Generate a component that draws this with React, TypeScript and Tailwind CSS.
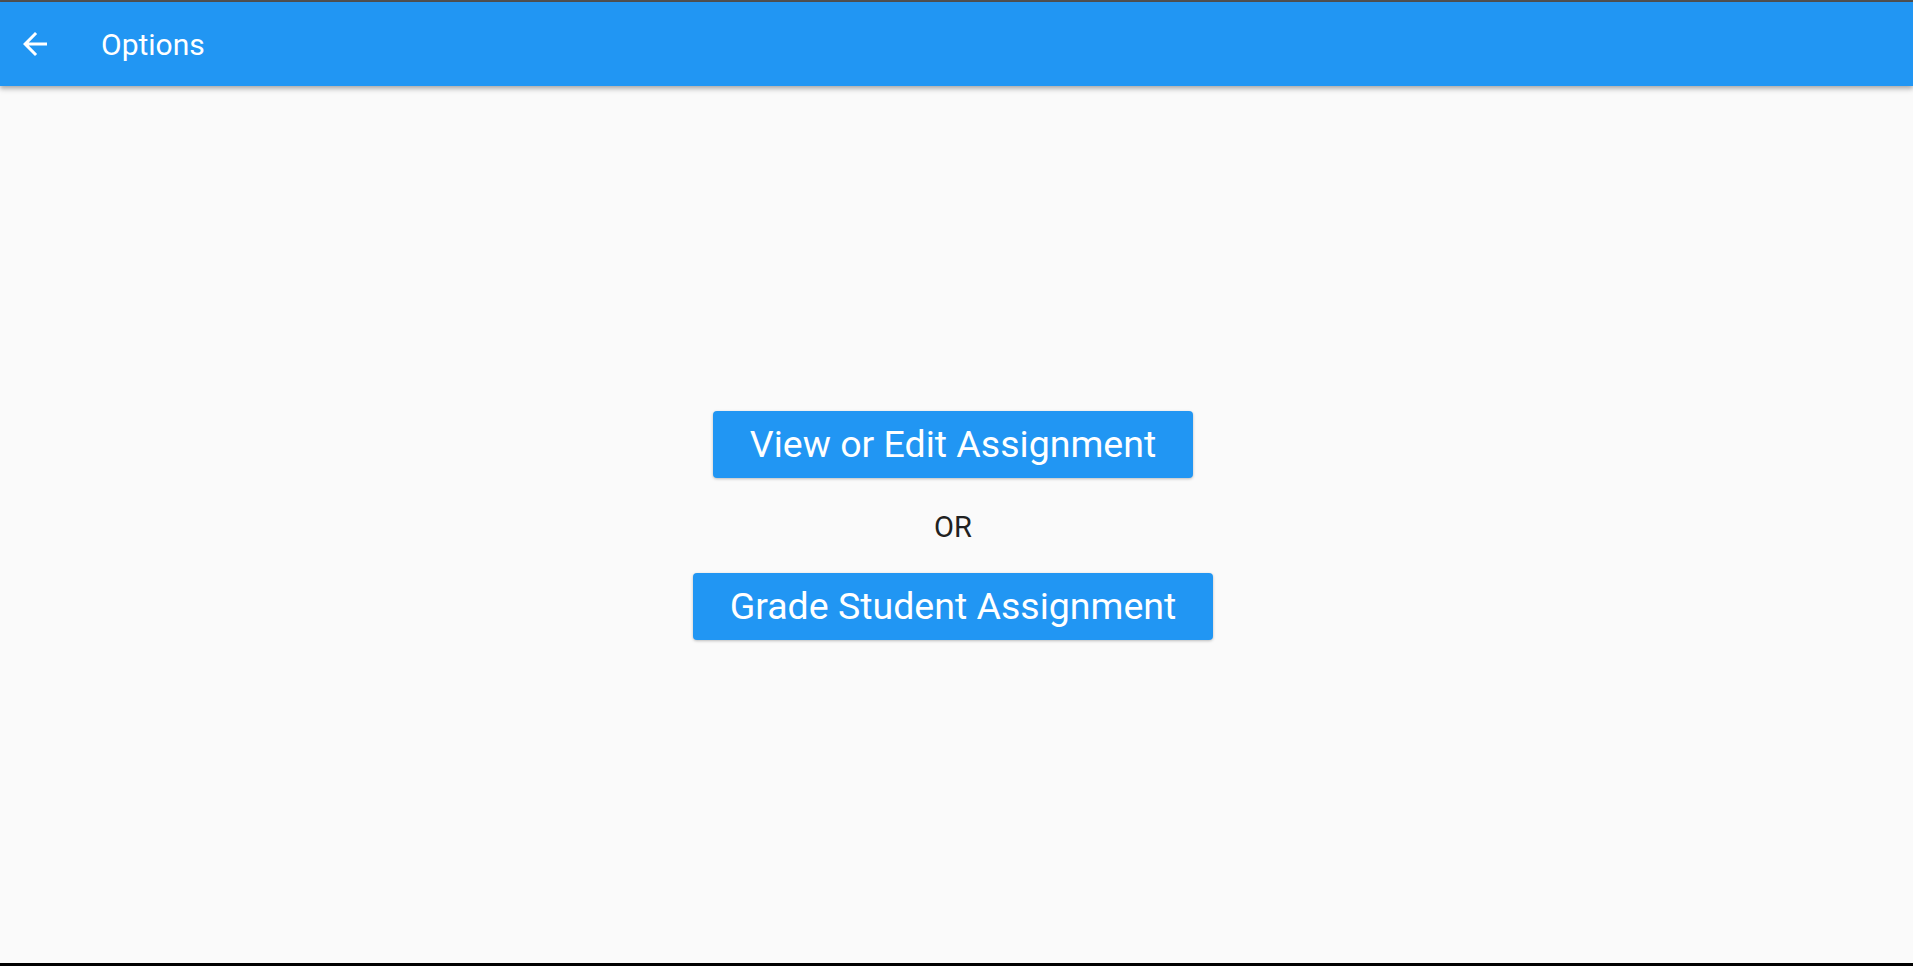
import React from "react";

export default function App() {
  return (
    <div className="w-[1913px] h-[966px] flex flex-col bg-[#fafafa] overflow-hidden" style={{ fontFamily: "Roboto, 'Liberation Sans', sans-serif" }}>
      <div className="h-[2px] bg-[#505050] shrink-0" />
      <header className="h-[84px] shrink-0 bg-[#2196f3] flex items-center relative z-10 shadow-[0_2px_4px_rgba(0,0,0,0.2),0_4px_5px_rgba(0,0,0,0.14)]">
        <div className="w-[101px] flex items-center pl-[23px] shrink-0">
          <svg width="24" height="24" viewBox="4 4 16 16" fill="white">
            <path d="M20 11H7.83l5.59-5.59L12 4l-8 8 8 8 1.41-1.41L7.83 13H20v-2z" />
          </svg>
        </div>
        <h1 className="text-[30px] leading-none text-white font-normal pt-[2px]">Options</h1>
      </header>
      <main className="flex-1 flex flex-col items-center justify-center pr-[7px] pt-[2px]">
        <button className="h-[67px] px-[37px] rounded-[4px] bg-[#2196f3] text-white text-[37.5px] leading-none shadow-[0_1px_3px_rgba(0,0,0,0.25)]">
          View or Edit Assignment
        </button>
        <div className="mt-[33px] mb-[30px] h-[32px] flex items-center text-[29px] leading-none text-[#212121]">OR</div>
        <button className="h-[67px] px-[37px] rounded-[4px] bg-[#2196f3] text-white text-[37.5px] leading-none shadow-[0_1px_3px_rgba(0,0,0,0.25)]">
          Grade Student Assignment
        </button>
      </main>
      <div className="h-[3px] bg-black shrink-0" />
    </div>
  );
}
